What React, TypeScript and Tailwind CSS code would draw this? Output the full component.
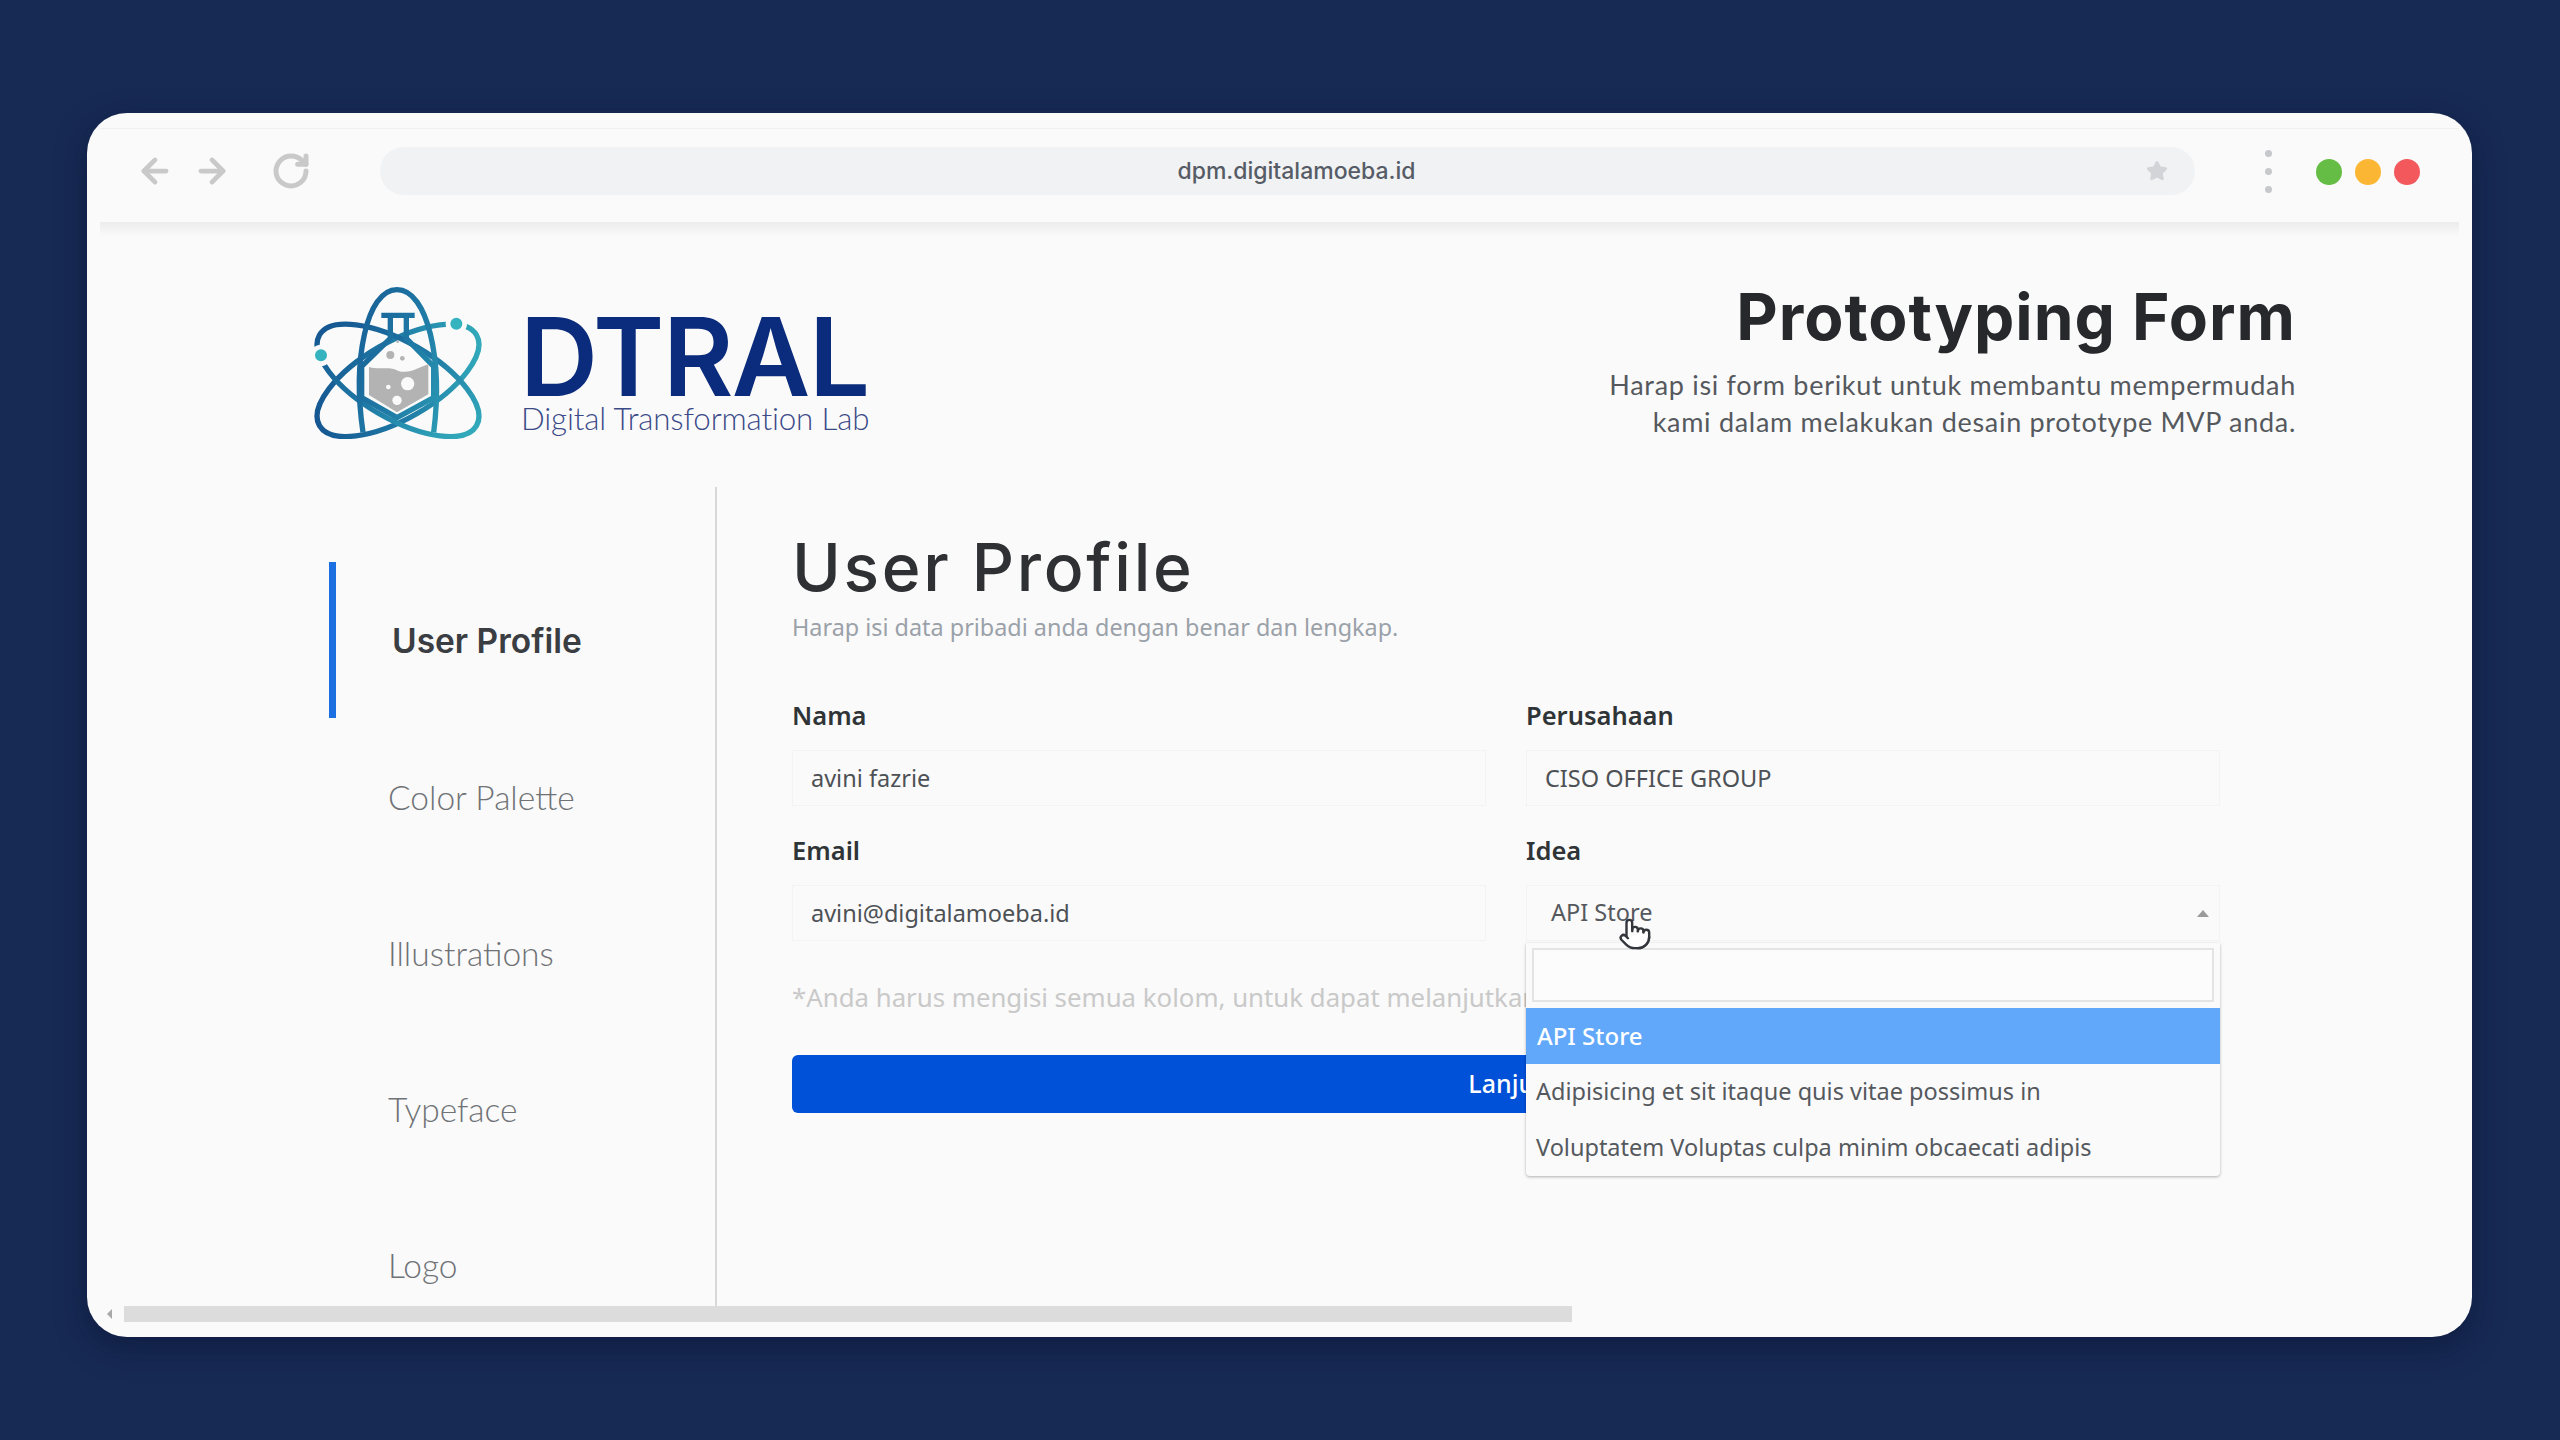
import { ArrowLeft, ArrowRight, Pointer, RotateCw, Star } from 'lucide-react';

const navItems = ['User Profile', 'Color Palette', 'Illustrations', 'Typeface', 'Logo'];

function LogoMark() {
  return (
    <svg width="170" height="152" viewBox="0 0 510 456" fill="none">
      <defs>
        <linearGradient id="atom" gradientUnits="userSpaceOnUse" x1="0" y1="120" x2="510" y2="330">
          <stop offset="0" stopColor="#14528f" />
          <stop offset="0.55" stopColor="#1f7ba6" />
          <stop offset="1" stopColor="#31a9ba" />
        </linearGradient>
      </defs>
      <g stroke="url(#atom)" strokeWidth="16">
        <ellipse cx="255" cy="280" rx="272" ry="115" transform="rotate(-30 255 280)" />
        <ellipse cx="255" cy="280" rx="272" ry="115" transform="rotate(30 255 280)" />
        <path d="M150 436 C118 220 160 8 252 8 C344 8 390 220 362 436" />
        <path d="M205 85 H305 M232 85 V154 L146 238 V332 L252 392 L362 332 V238 L280 154 V85" strokeLinejoin="round" />
      </g>
      <path d="M168 240 C200 250 230 236 256 252 C290 262 320 240 346 232 V322 L252 376 L168 324 Z" fill="#b3b3b3" />
      <circle cx="284" cy="290" r="20" fill="#fafafa" />
      <circle cx="252" cy="340" r="14" fill="#fafafa" />
      <circle cx="226" cy="300" r="7" fill="#fafafa" />
      <circle cx="232" cy="204" r="12" fill="#b3b3b3" />
      <circle cx="268" cy="214" r="7" fill="#b3b3b3" />
      <circle cx="254" cy="164" r="4" fill="#b3b3b3" />
      <circle cx="430" cy="110" r="25" fill="#35b4c0" stroke="#fafafa" strokeWidth="14" />
      <circle cx="24" cy="205" r="25" fill="#35b4c0" stroke="#fafafa" strokeWidth="14" />
    </svg>
  );
}

function Field({ label, value }: { label: string; value: string }) {
  return (
    <div className="flex flex-col">
      <label className="text-[25.5px] leading-[32px] font-semibold text-[#2f3437]">{label}</label>
      <input
        readOnly
        value={value}
        className="mt-[19px] h-[56px] w-full border border-[#f3f3f2] bg-transparent px-[18px] text-[23.5px] text-[#4d5156] outline-none"
      />
    </div>
  );
}

export default function App() {
  return (
    <div className="flex h-[1440px] w-full items-start bg-[#172a54] pt-[113px] pl-[87px] font-['Noto_Sans',sans-serif]">
      <div className="flex h-[1224px] w-[2385px] flex-col overflow-hidden rounded-[40px] bg-[#fafafa] shadow-[0_10px_30px_rgba(10,18,50,0.55)]">
        {/* browser chrome */}
        <div className="h-[109px] shrink-0 px-[13px] pt-[15px]">
          <div className="flex h-full items-start border-t border-[#f0f0ef] pt-[18px] pl-[36px]">
            <div className="flex h-[48px] items-center text-[#c9c9c9]">
              <ArrowLeft size={38} strokeWidth={3} />
              <ArrowRight size={38} strokeWidth={3} className="ml-[19px]" />
              <RotateCw size={40} strokeWidth={3} className="ml-[40px]" />
            </div>
            <div className="relative ml-[69px] flex h-[48px] w-[1815px] items-center justify-center rounded-full bg-[#f1f2f4] pl-[18px]">
              <span className="font-['Inter',sans-serif] text-[23px] font-medium text-[#565c66]">dpm.digitalamoeba.id</span>
              <Star size={22} className="absolute right-[27px] fill-[#d2d4d8] text-[#d2d4d8]" />
            </div>
            <div className="ml-[70px] flex h-[48px] flex-col items-center justify-center gap-[11px]">
              <span className="h-[7px] w-[7px] rounded-full bg-[#c6c8cc]" />
              <span className="h-[7px] w-[7px] rounded-full bg-[#c6c8cc]" />
              <span className="h-[7px] w-[7px] rounded-full bg-[#c6c8cc]" />
            </div>
            <div className="mt-[1px] ml-[44px] flex h-[48px] items-center gap-[13px]">
              <span className="h-[26px] w-[26px] rounded-full bg-[#66bd45]" />
              <span className="h-[26px] w-[26px] rounded-full bg-[#fbb733]" />
              <span className="h-[26px] w-[26px] rounded-full bg-[#f2585c]" />
            </div>
          </div>
        </div>
        <div className="mx-[13px] h-[15px] shrink-0 bg-gradient-to-b from-[#ececec] to-transparent" />

        {/* page header */}
        <div className="flex h-[250px] shrink-0 justify-between pt-[50px] pr-[176px] pl-[226px]">
          <div className="flex items-start gap-[37px]">
            <LogoMark />
            <div className="flex flex-col pt-[30px]">
              <span className="font-['Inter',sans-serif] text-[108px] leading-[80px] font-semibold tracking-[-1.5px] text-[#0b2c7c]">DTRAL</span>
              <span className="font-['Lato',sans-serif] mt-[5px] ml-[1px] text-[31.3px] leading-[32px] font-light tracking-[-0.15px] text-[#3b4a88]">Digital Transformation Lab</span>
            </div>
          </div>
          <div className="-mt-[6px] flex flex-col items-end text-right">
            <h2 className="font-['Inter',sans-serif] text-[64px] leading-[72px] font-bold tracking-[1px] text-[#26282b]">Prototyping Form</h2>
            <p className="mt-[13px] font-['Lato',sans-serif] text-[27px] leading-[37px] tracking-[0.7px] text-[#55595e]">
              Harap isi form berikut untuk membantu mempermudah
              <br />
              kami dalam melakukan desain prototype MVP anda.
            </p>
          </div>
        </div>

        {/* sidebar and form */}
        <div className="flex h-[819px] min-h-0 shrink-0">
          <nav className="h-full w-[630px] shrink-0 overflow-hidden border-r-2 border-[#d8d8d8] pt-[75px] pl-[242px]">
            {navItems.map((item, i) => (
              <div
                key={item}
                className={
                  i === 0
                    ? "flex h-[156px] items-center border-l-[7px] border-[#1b6fe0] pt-[3px] pl-[56px] font-['Inter',sans-serif] text-[33.5px] font-semibold text-[#3a3d42]"
                    : "flex h-[156px] items-center border-l-[7px] border-transparent pt-[3px] pl-[52px] font-['Lato',sans-serif] text-[33.5px] font-light text-[#6f7276]"
                }
              >
                {item}
              </div>
            ))}
          </nav>

          <div className="box-content w-[1428px] pt-[40px] pl-[75px]">
            <h1 className="font-['Inter',sans-serif] text-[66px] leading-[80px] font-medium tracking-[2.7px] text-[#2e3033]">User Profile</h1>
            <p className="mt-[4px] text-[23.4px] leading-[32px] text-[#9aa1a9]">Harap isi data pribadi anda dengan benar dan lengkap.</p>

            <div className="mt-[56px] grid grid-cols-2 gap-x-[40px] gap-y-[28px]">
              <Field label="Nama" value="avini fazrie" />
              <Field label="Perusahaan" value="CISO OFFICE GROUP" />
              <Field label="Email" value="avini@digitalamoeba.id" />
              <div className="relative flex flex-col">
                <label className="text-[25.5px] leading-[32px] font-semibold text-[#2f3437]">Idea</label>
                <div className="mt-[19px] flex h-[56px] items-center justify-between border border-[#f3f3f2] pr-[10px] pl-[24px] text-[23.5px] text-[#55595e]">
                  <span>API Store</span>
                  <span className="h-0 w-0 border-x-[6px] border-b-[7px] border-x-transparent border-b-[#9a9a9a]" />
                </div>
                <Pointer size={34} strokeWidth={1.7} className="absolute top-[83px] left-[92px] z-20 fill-white text-[#33363a]" />
                {/* open select menu */}
                <div className="absolute top-[109px] left-0 z-10 w-full rounded-b-[4px] bg-[#fafafa] shadow-[0_1px_3px_rgba(0,0,0,0.3)]">
                  <div className="px-[6px] pt-[5px] pb-[6px]">
                    <div className="h-[54px] border-2 border-[#e3e4e6] bg-[#fcfcfc]" />
                  </div>
                  <div className="flex h-[56px] items-center bg-[#62a8fa] px-[11px] text-[24px] font-medium text-white">API Store</div>
                  <div className="flex h-[56px] items-center px-[10px] text-[23.5px] text-[#55595e]">Adipisicing et sit itaque quis vitae possimus in</div>
                  <div className="flex h-[56px] items-center px-[10px] text-[23.5px] text-[#55595e]">Voluptatem Voluptas culpa minim obcaecati adipis</div>
                </div>
              </div>
            </div>

            <p className="mt-[38px] text-[25.8px] leading-[36px] whitespace-nowrap text-[#c9c9c9]">
              *Anda harus mengisi semua kolom, untuk dapat melanjutkan
            </p>
            <button className="mt-[40px] flex h-[58px] w-full items-center justify-center rounded-[6px] bg-[#0050d8] text-[25px] font-medium text-white">
              Lanjut
            </button>
          </div>
        </div>

        {/* horizontal scrollbar */}
        <div className="flex h-[16px] shrink-0 items-center pl-[20px]">
          <span className="h-0 w-0 border-y-[5px] border-r-[5px] border-y-transparent border-r-[#a8a8a8]" />
          <div className="ml-[12px] h-[16px] w-[1448px] bg-[#dcdcdc]" />
        </div>
      </div>
    </div>
  );
}
